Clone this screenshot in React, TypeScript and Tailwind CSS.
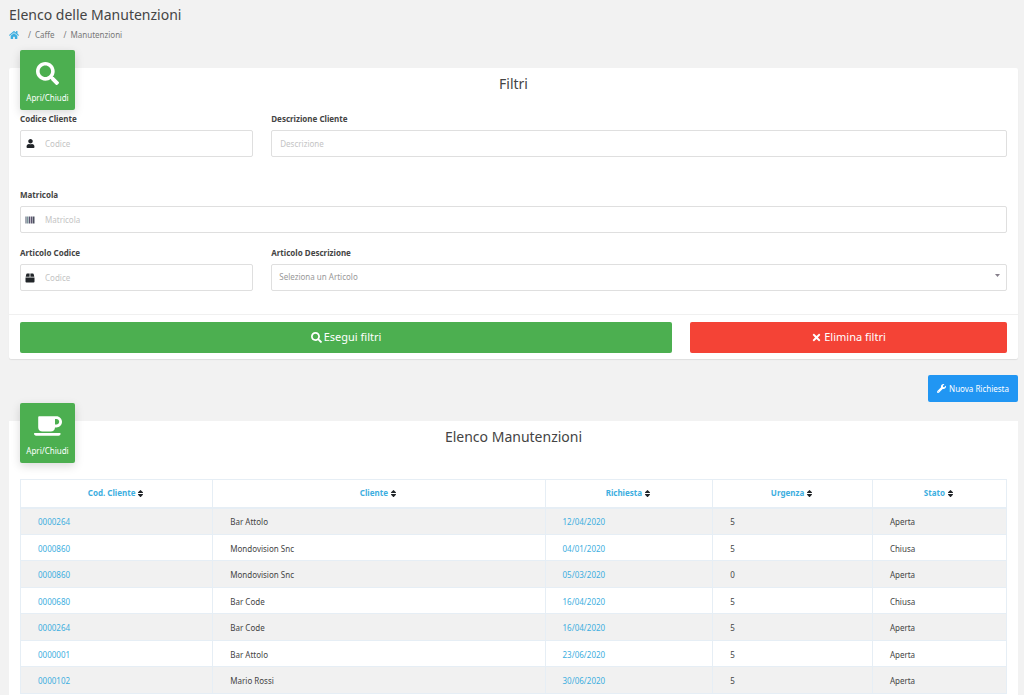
import React, { useState } from 'react';
import { FaHome, FaSearch, FaCoffee, FaUser, FaTimes, FaWrench, FaSort } from 'react-icons/fa';

interface Manutenzione {
  codice: string;
  cliente: string;
  richiesta: string;
  urgenza: number;
  stato: string;
}

const MANUTENZIONI: Manutenzione[] = [
  { codice: '0000264', cliente: 'Bar Attolo', richiesta: '12/04/2020', urgenza: 5, stato: 'Aperta' },
  { codice: '0000860', cliente: 'Mondovision Snc', richiesta: '04/01/2020', urgenza: 5, stato: 'Chiusa' },
  { codice: '0000860', cliente: 'Mondovision Snc', richiesta: '05/03/2020', urgenza: 0, stato: 'Aperta' },
  { codice: '0000680', cliente: 'Bar Code', richiesta: '16/04/2020', urgenza: 5, stato: 'Chiusa' },
  { codice: '0000264', cliente: 'Bar Code', richiesta: '16/04/2020', urgenza: 5, stato: 'Aperta' },
  { codice: '0000001', cliente: 'Bar Attolo', richiesta: '23/06/2020', urgenza: 5, stato: 'Aperta' },
  { codice: '0000102', cliente: 'Mario Rossi', richiesta: '30/06/2020', urgenza: 5, stato: 'Aperta' },
];

const COLUMNS = [
  { label: 'Cod. Cliente', width: 'w-[19.5%]' },
  { label: 'Cliente', width: 'w-[33.7%]' },
  { label: 'Richiesta', width: 'w-[17%]' },
  { label: 'Urgenza', width: 'w-[16.2%]' },
  { label: 'Stato', width: 'w-[13.6%]' },
];

const CELL = 'border border-[#e6eef5] px-[17px] pt-[2px] pb-0';

const BarcodeIcon = () => (
  <svg width="10" height="8" viewBox="0 0 10 8" aria-hidden="true">
    <path fill="#4a5568" d="M0.5 0.5h1v7h-1z" />
    <path fill="#7d949c" d="M2 0.5h1.6v7H2z" />
    <path fill="#5c5470" d="M4 0.5h1.4v7H4zM6 0.5h1.2v7H6z" />
    <path fill="#4a4f5e" d="M7.6 0.5h1.9v7H7.6z" />
  </svg>
);

const BoxIcon = () => (
  <svg width="10" height="10" viewBox="0 0 10 10" aria-hidden="true" fill="currentColor">
    <path d="M2 0.6h2.6v3.2H0.7L1.3 1.2Q1.5 0.6 2 0.6zM5.4 0.6H8q0.5 0 0.7 0.6l0.6 2.6H5.4z" />
    <path d="M0.5 4.4h9v4.1q0 0.9-0.9 0.9H1.4q-0.9 0-0.9-0.9z" />
  </svg>
);

const ToggleButton: React.FC<{ icon: React.ReactNode; onClick: () => void }> = ({ icon, onClick }) => (
  <button type="button" onClick={onClick} className="absolute -top-[18px] left-[11px] flex h-[60px] w-[55px] flex-col items-center justify-between rounded-xs bg-[#4caf50] pt-[9px] pb-[5px] text-white shadow-[0_3px_10px_rgba(0,0,0,0.15)]">
    <span className="flex h-7 items-center">{icon}</span>
    <span className="text-[8px] leading-[14px]">Apri/Chiudi</span>
  </button>
);

const Field: React.FC<{ id: string; label: string; placeholder: string; icon?: React.ReactNode; className: string }> = ({ id, label, placeholder, icon, className }) => (
  <div className={className}>
    <label htmlFor={id} className="block h-[17px] text-[8px] leading-[12px] font-bold">{label}</label>
    <div className="flex h-[27px] items-center rounded-xs border border-[#dfdfdf] bg-white">
      {icon && <span className="mr-[2px] ml-1 flex w-[10px] shrink-0 justify-center text-[#212529]">{icon}</span>}
      <input id={id} type="text" placeholder={placeholder} className="h-full w-full min-w-0 bg-transparent px-2 text-[8px] outline-none placeholder:text-[#c4c4c4]" />
    </div>
  </div>
);

const App: React.FC = () => {
  const [showFilters, setShowFilters] = useState(true);
  const [showList, setShowList] = useState(true);

  return (
    <div className="flex min-h-screen flex-col bg-[#f2f2f2] pr-[6px] pl-[9px] font-['Noto_Sans','Open_Sans',sans-serif] text-[8px] text-[#444]">
      <header className="h-[68px] pt-[5px]">
        <h1 className="text-[14px] leading-[20px]">Elenco delle Manutenzioni</h1>
        <nav aria-label="Breadcrumb" className="mt-[3px] flex h-[14px] items-center text-[#777]">
          <a href="#" aria-label="Home" className="text-[#3caee0]"><FaHome size={10} /></a>
          <span className="ml-[9px]">/</span>
          <a href="#" className="ml-1">Caffe</a>
          <span className="ml-[9px]">/</span>
          <span className="ml-1">Manutenzioni</span>
        </nav>
      </header>

      <section className="relative rounded-xs bg-white shadow-[0_1px_1px_rgba(0,0,0,0.08)]">
        <ToggleButton icon={<FaSearch size={23} />} onClick={() => setShowFilters(!showFilters)} />
        <h2 className="h-[45px] pt-[6px] text-center text-[14px] leading-[20px]">Filtri</h2>
        {showFilters && (
          <form onSubmit={(e) => e.preventDefault()}>
            <div className="grid grid-cols-12 gap-x-[18px] px-[11px] pb-[23px]">
              <Field id="codice-cliente" label="Codice Cliente" placeholder="Codice" icon={<FaUser size={9} />} className="col-span-3" />
              <Field id="descrizione-cliente" label="Descrizione Cliente" placeholder="Descrizione" className="col-span-9" />
              <Field id="matricola" label="Matricola" placeholder="Matricola" icon={<BarcodeIcon />} className="col-span-12 mt-8" />
              <Field id="articolo-codice" label="Articolo Codice" placeholder="Codice" icon={<BoxIcon />} className="col-span-3 mt-[14px]" />
              <div className="col-span-9 mt-[14px]">
                <label htmlFor="articolo-descrizione" className="block h-[17px] text-[8px] leading-[12px] font-bold">Articolo Descrizione</label>
                <div className="relative">
                  <select id="articolo-descrizione" className="block h-[27px] w-full appearance-none rounded-xs border border-[#dfdfdf] bg-white px-[7px] pb-[2px] text-[8px] text-[#999] outline-none">
                    <option>Seleziona un Articolo</option>
                  </select>
                  <svg width="5" height="3" viewBox="0 0 5 3" aria-hidden="true" className="pointer-events-none absolute top-[10px] right-[7px]">
                    <path fill="#857f8a" d="M0 0h5L2.5 3z" />
                  </svg>
                </div>
              </div>
            </div>
            <div className="grid grid-cols-12 gap-x-[18px] border-t border-[#f0f0f0] px-[11px] pt-[7px] pb-[6px] text-[11px] text-white">
              <button type="submit" className="col-span-8 flex h-[31px] items-center justify-center gap-[2px] rounded-xs bg-[#4caf50]"><FaSearch size={11} />Esegui filtri</button>
              <button type="reset" className="col-span-4 flex h-[31px] items-center justify-center gap-[2px] rounded-xs bg-[#f44336]"><FaTimes size={11} />Elimina filtri</button>
            </div>
          </form>
        )}
      </section>

      <div className="flex justify-end pt-4 pb-[19px]">
        <button type="button" className="flex h-[27px] items-center gap-[3px] rounded-xs bg-[#2196f3] px-[9px] text-[8px] text-white"><FaWrench size={9} />Nuova Richiesta</button>
      </div>

      <section className="relative flex-1 bg-white px-[11px]">
        <ToggleButton icon={<FaCoffee size={28} />} onClick={() => setShowList(!showList)} />
        <h2 className="h-[58px] pt-[6px] text-center text-[14px] leading-[20px]">Elenco Manutenzioni</h2>
        {showList && (
          <table className="w-full table-fixed border-collapse leading-[12px]">
            <thead>
              <tr className="h-[28px]">
                {COLUMNS.map((col) => (
                  <th key={col.label} className={`border border-b-2 border-[#e6eef5] p-0 ${col.width}`}>
                    <a href="#" className="inline-flex items-center gap-px font-bold text-[#3caee0]">{col.label}<FaSort size={9} className="text-[#212529]" /></a>
                  </th>
                ))}
              </tr>
            </thead>
            <tbody>
              {MANUTENZIONI.map((m, idx) => (
                <tr key={idx} className="odd:h-[27px] odd:bg-[#f1f1f1] even:h-[26px]">
                  <td className={CELL}><a href="#" className="text-[#3caee0]">{m.codice}</a></td>
                  <td className={CELL}>{m.cliente}</td>
                  <td className={CELL}><a href="#" className="text-[#3caee0]">{m.richiesta}</a></td>
                  <td className={CELL}>{m.urgenza}</td>
                  <td className={CELL}>{m.stato}</td>
                </tr>
              ))}
            </tbody>
          </table>
        )}
      </section>
    </div>
  );
};

export default App;
